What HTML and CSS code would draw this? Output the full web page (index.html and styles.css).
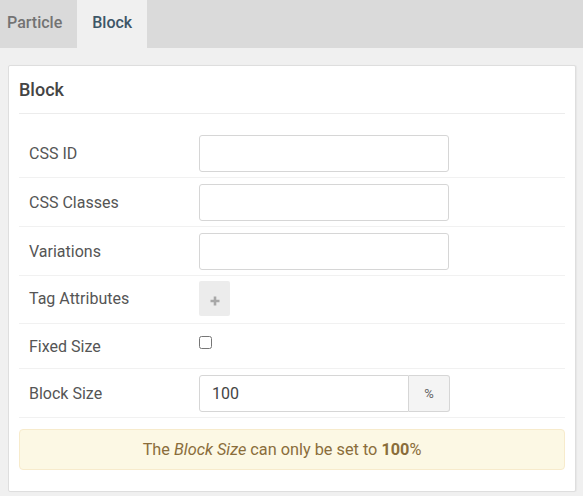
FILE: index.html
```html
<!DOCTYPE html>
<html>
<head>
<meta charset="utf-8">
<link rel="stylesheet" href="styles.css">
</head>
<body>
<div class="tabs">
  <div class="tab tab-first">Particle</div>
  <div class="tab tab-active">Block</div>
</div>
<div class="page">
  <div class="card">
    <div class="card-header">Block</div>
    <div class="form">
      <div class="row">
        <div class="label">CSS ID</div>
        <div class="control"><input class="input" type="text"></div>
      </div>
      <div class="row">
        <div class="label">CSS Classes</div>
        <div class="control"><input class="input" type="text"></div>
      </div>
      <div class="row">
        <div class="label">Variations</div>
        <div class="control"><input class="input" type="text"></div>
      </div>
      <div class="row row-tag">
        <div class="label">Tag Attributes</div>
        <div class="control">
          <button class="add-btn" type="button"><svg width="10" height="10" viewBox="0 0 10 10"><path d="M5 0.5v9M0.5 5h9" stroke="#a8a8a8" stroke-width="2.6" fill="none"/></svg></button>
        </div>
      </div>
      <div class="row row-check">
        <div class="label">Fixed Size</div>
        <div class="control"><input class="check" type="checkbox"></div>
      </div>
      <div class="row">
        <div class="label">Block Size</div>
        <div class="control">
          <div class="input-group">
            <input class="input input-size" type="text" value="100">
            <span class="addon">%</span>
          </div>
        </div>
      </div>
    </div>
    <div class="alert">The <em>Block Size</em> can only be set to <strong>100</strong>%</div>
  </div>
</div>
</body>
</html>
```
FILE: styles.css
```css
html, body {
  margin: 0;
  padding: 0;
  background: #f0f0f0;
  font-family: Roboto, "Liberation Sans", sans-serif;
}

.tabs {
  display: flex;
  height: 48px;
  background: #dadada;
}

.tab {
  padding: 0 15px;
  line-height: 45px;
  font-size: 16px;
  font-weight: 500;
  color: #737373;
}

.tab-first {
  padding-left: 7px;
}

.tab-active {
  background: #f0f0f0;
  color: #3d5667;
}

.page {
  padding: 17px 7px 5px 8px;
}

.card {
  background: #fff;
  border: 1px solid #dedede;
  border-radius: 2px;
  padding: 0 10px 21px 10px;
  box-shadow: 1px 0 1px rgba(0, 0, 0, 0.04);
}

.card-header {
  height: 47px;
  line-height: 47px;
  font-size: 18px;
  font-weight: 500;
  color: #444;
  border-bottom: 1px solid #ececec;
}

.form {
  padding-top: 15px;
}

.row {
  display: flex;
  align-items: center;
  min-height: 49px;
  box-sizing: border-box;
  padding: 6px 0 5px;
  border-bottom: 1px solid #f1f1f1;
}

.row-tag {
  min-height: 48px;
  padding: 5px 0 7px;
}

.row-check {
  min-height: 45px;
  padding: 0;
}

.label {
  width: 170px;
  padding-left: 10px;
  font-size: 16px;
  color: #555;
}

.control {
  display: flex;
  align-items: center;
}

.input {
  box-sizing: border-box;
  width: 250px;
  height: 37px;
  margin: 0;
  border: 1px solid #d6d6d6;
  border-radius: 3px;
  background: #fff;
  padding: 0 12px;
  font-family: Roboto, "Liberation Sans", sans-serif;
  font-size: 16px;
  color: #444;
  outline: none;
}

.input-group {
  display: flex;
}

.input-size {
  width: 210px;
  border-radius: 3px 0 0 3px;
}

.addon {
  box-sizing: border-box;
  width: 41px;
  height: 37px;
  display: flex;
  align-items: center;
  justify-content: center;
  background: #f4f4f4;
  border: 1px solid #d6d6d6;
  border-left: none;
  border-radius: 0 3px 3px 0;
  font-size: 13px;
  color: #666;
}

.add-btn {
  width: 31px;
  height: 35px;
  padding: 5px 0 0;
  margin: 0;
  border: none;
  border-radius: 2px;
  background: #ececec;
  display: flex;
  align-items: center;
  justify-content: center;
}

.check {
  width: 13px;
  height: 13px;
  margin: 0 0 7px 0;
}

.alert {
  margin-top: 11px;
  padding: 10px 35px 10px 15px;
  line-height: 19px;
  background: #fcf8e4;
  border: 1px solid #f7ebcc;
  border-radius: 4px;
  text-align: center;
  font-size: 16.3px;
  color: #8a6d3b;
}

.alert strong {
  font-weight: 700;
}
```
